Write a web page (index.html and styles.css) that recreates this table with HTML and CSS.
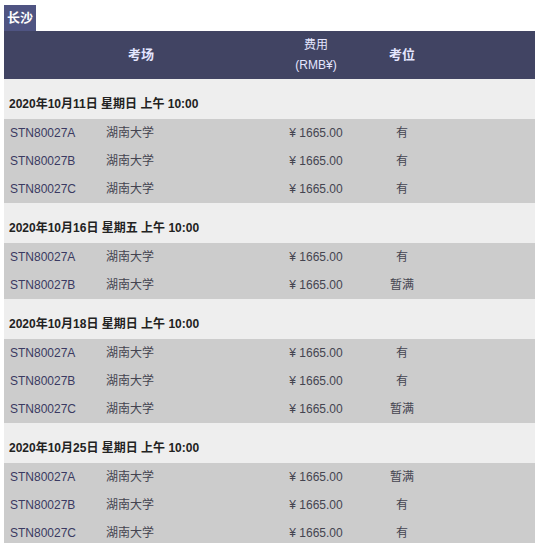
FILE: index.html
```html
<!DOCTYPE html>
<html lang="zh">
<head>
<meta charset="utf-8">
<link rel="stylesheet" href="styles.css">
</head>
<body>
<div class="page">
  <div class="city">长沙</div>
  <table class="exams">
    <colgroup>
      <col class="c-code"><col class="c-name"><col class="c-fee"><col class="c-seat"><col class="c-rest">
    </colgroup>
    <thead>
      <tr class="head">
        <th colspan="2" class="bold">考场</th>
        <th>费用<br>(RMB¥)</th>
        <th class="bold">考位</th>
        <th></th>
      </tr>
    </thead>
    <tbody>
      <tr class="date"><td colspan="5">2020年10月11日 星期日 上午 10:00</td></tr>
      <tr class="row"><td class="code">STN80027A</td><td class="name">湖南大学</td><td class="fee">¥ 1665.00</td><td class="seat">有</td><td></td></tr>
      <tr class="row"><td class="code">STN80027B</td><td class="name">湖南大学</td><td class="fee">¥ 1665.00</td><td class="seat">有</td><td></td></tr>
      <tr class="row"><td class="code">STN80027C</td><td class="name">湖南大学</td><td class="fee">¥ 1665.00</td><td class="seat">有</td><td></td></tr>

      <tr class="date"><td colspan="5">2020年10月16日 星期五 上午 10:00</td></tr>
      <tr class="row"><td class="code">STN80027A</td><td class="name">湖南大学</td><td class="fee">¥ 1665.00</td><td class="seat">有</td><td></td></tr>
      <tr class="row"><td class="code">STN80027B</td><td class="name">湖南大学</td><td class="fee">¥ 1665.00</td><td class="seat">暂满</td><td></td></tr>

      <tr class="date"><td colspan="5">2020年10月18日 星期日 上午 10:00</td></tr>
      <tr class="row"><td class="code">STN80027A</td><td class="name">湖南大学</td><td class="fee">¥ 1665.00</td><td class="seat">有</td><td></td></tr>
      <tr class="row"><td class="code">STN80027B</td><td class="name">湖南大学</td><td class="fee">¥ 1665.00</td><td class="seat">有</td><td></td></tr>
      <tr class="row"><td class="code">STN80027C</td><td class="name">湖南大学</td><td class="fee">¥ 1665.00</td><td class="seat">暂满</td><td></td></tr>

      <tr class="date"><td colspan="5">2020年10月25日 星期日 上午 10:00</td></tr>
      <tr class="row"><td class="code">STN80027A</td><td class="name">湖南大学</td><td class="fee">¥ 1665.00</td><td class="seat">暂满</td><td></td></tr>
      <tr class="row"><td class="code">STN80027B</td><td class="name">湖南大学</td><td class="fee">¥ 1665.00</td><td class="seat">有</td><td></td></tr>
      <tr class="row"><td class="code">STN80027C</td><td class="name">湖南大学</td><td class="fee">¥ 1665.00</td><td class="seat">有</td><td></td></tr>
    </tbody>
  </table>
</div>
</body>
</html>
```
FILE: styles.css
```css
html, body {
  margin: 0;
  padding: 0;
  background: #ffffff;
}
body {
  font-family: "Liberation Sans", Arial, "Noto Sans CJK SC", sans-serif;
  font-size: 12px;
  color: #333333;
}
.page {
  padding: 5px 2px 0 4px;
}
.city {
  display: inline-block;
  height: 26px;
  line-height: 26px;
  padding: 0 3px;
  background: #4f5482;
  color: #ffffff;
  font-weight: bold;
  font-size: 13px;
  vertical-align: top;
}
.exams {
  width: 531px;
  border-collapse: collapse;
  border-spacing: 0;
  table-layout: fixed;
}
.c-code { width: 96px; }
.c-name { width: 178px; }
.c-fee { width: 76px; }
.c-seat { width: 96px; }
.c-rest { width: 85px; }
.exams td, .exams th {
  padding: 0;
  line-height: 16px;
}
.head {
  height: 48px;
  background: #414463;
}
.head th {
  color: #e4e6ff;
  font-weight: normal;
  font-size: 12px;
  line-height: 20px;
  text-align: center;
  vertical-align: middle;
}
.head th.bold {
  font-weight: bold;
  font-size: 13px;
}
.date {
  height: 40px;
  background: #eeeeee;
}
.date td {
  padding: 10px 0 0 5px;
  font-weight: bold;
  font-size: 12px;
  color: #222222;
  vertical-align: middle;
}
.row {
  height: 28px;
  background: #cccccc;
}
.row td {
  vertical-align: middle;
  color: #444450;
}
.row td.code {
  padding-left: 6px;
  color: #3a3a62;
}
.row td.name {
  padding-left: 6px;
}
.row td.fee, .row td.seat {
  text-align: center;
}
```
